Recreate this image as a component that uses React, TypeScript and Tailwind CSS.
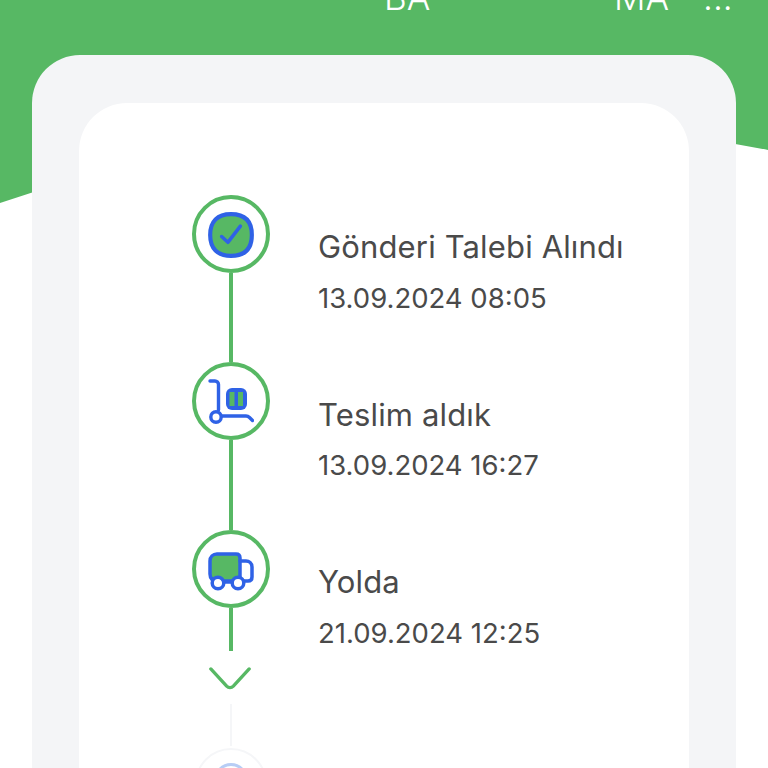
import React from 'react';

const GREEN = '#57b864';
const BLUE = '#2f62e6';

const CheckIcon = () => (
  <svg className="mt-[2px] mr-[1px]" width="50" height="50" viewBox="0 0 48 48" fill="none">
    <path d="M24 4c13 0 20 6 20 20s-7 20-20 20S4 37 4 24 11 4 24 4z" fill={GREEN} stroke={BLUE} strokeWidth="4" />
    <path d="M15 25.500l6 5.500L33 15.500" stroke={BLUE} strokeWidth="3.400" strokeLinecap="round" strokeLinejoin="round" />
  </svg>
);

const TrolleyIcon = () => (
  <svg className="mt-[2px]" width="46" height="46" viewBox="0 0 46 46" fill="none">
    <path d="M2 2h5a3.500 3.500 0 0 1 3.500 3.500V31" stroke={BLUE} strokeWidth="3.400" strokeLinecap="round" />
    <circle cx="8" cy="38" r="5.200" stroke={BLUE} strokeWidth="3.400" />
    <path d="M14 37h24c1.500 0 2.500 .5 3.500 1.500l3 3" stroke={BLUE} strokeWidth="3.400" strokeLinecap="round" />
    <rect x="18" y="9" width="21" height="22" rx="6" fill={BLUE} />
    <rect x="21.500" y="13" width="5" height="14" fill={GREEN} />
    <rect x="30" y="13" width="5" height="14" fill={GREEN} />
  </svg>
);

const TruckIcon = () => (
  <svg className="mt-[6px]" width="46" height="40" viewBox="0 0 46 40" fill="none">
    <path d="M9 2h19c2.500 0 4 1.500 4 4v23H11a7 7 0 0 0-7-1.500C2.500 26 2 24 2 22V9c0-4 3-7 7-7z" fill={GREEN} stroke={BLUE} strokeWidth="3.500" strokeLinejoin="round" />
    <path d="M32 9h6c3 0 6 2 6 6v10c0 3-2 4-4 4h-4" stroke={BLUE} strokeWidth="3.500" strokeLinecap="round" />
    <path d="M14 30h16" stroke={BLUE} strokeWidth="3.500" />
    <circle cx="10" cy="31" r="5.800" fill="#fff" stroke={BLUE} strokeWidth="3.500" />
    <circle cx="30" cy="31" r="5.800" fill="#fff" stroke={BLUE} strokeWidth="3.500" />
  </svg>
);

const steps = [
  { title: 'Gönderi Talebi Alındı', date: '13.09.2024 08:05', icon: <CheckIcon /> },
  { title: 'Teslim aldık', date: '13.09.2024 16:27', icon: <TrolleyIcon /> },
  { title: 'Yolda', date: '21.09.2024 12:25', icon: <TruckIcon /> },
];

export default function App() {
  return (
    <div className="relative w-[768px] h-[768px] overflow-hidden bg-white font-['Inter',sans-serif]">
      {/* green backdrop with its curved lower edge */}
      <svg className="absolute left-0 top-0" width="768" height="210" viewBox="0 0 768 210">
        <path d="M0 0H768V150C520 100 250 120 0 203Z" fill={GREEN} />
      </svg>

      <div className="relative flex flex-col">
        <div className="h-[55px] relative text-white text-[35px] font-light leading-[42px]">
          <span className="absolute left-[384px] top-[-24px]">BA</span>
          <span className="absolute left-[614px] top-[-24px]">MA</span>
          <span className="absolute left-[703px] top-[-24px]">...</span>
        </div>

        <div className="mx-[32px] h-[800px] rounded-t-[48px] bg-[#f4f5f7] pt-[48px] px-[47px]">
          <div className="h-[760px] rounded-t-[48px] bg-white pt-[91.500px] pl-[113px] flex flex-col">
            {steps.map((step, i) => (
              <div key={step.title} className="flex gap-[48px]">
                <div className="w-[78px] flex flex-col items-center">
                  <div className="w-[78px] h-[78px] rounded-full border-4 border-[#57b864] flex items-center justify-center">
                    {step.icon}
                  </div>
                  <div className={i < 2 ? 'w-[4px] h-[89.500px] bg-[#57b864]' : 'w-[4px] h-[43.500px] bg-[#57b864]'} />
                </div>
                <div className="pt-[34.500px] text-[#4a4a4a]">
                  <div className="text-[31px] tracking-[0.15px] leading-[36px]">{step.title}</div>
                  <div className="mt-[14.500px] text-[27.500px] leading-[36px]">{step.date}</div>
                </div>
              </div>
            ))}

            <div className="w-[78px] flex flex-col items-center">
              <svg className="mt-[16px] mr-[3px]" width="44" height="23" viewBox="0 0 44 24" fill="none">
                <path d="M2 2l16.500 18c2 2 5 2 7 0L42 2" stroke={GREEN} strokeWidth="3.500" strokeLinecap="round" />
              </svg>
              <div className="mt-[14px] w-[2px] h-[42px] bg-[#f5f6f8]" />
              <div className="mt-[2px] w-[72px] h-[72px] rounded-full border-2 border-[#f5f6f8] flex justify-center pt-[13px]">
                <div className="w-[34px] h-[34px] rounded-full border-[3px] border-[#b7cdf5]" />
              </div>
            </div>
          </div>
        </div>
      </div>
    </div>
  );
}
